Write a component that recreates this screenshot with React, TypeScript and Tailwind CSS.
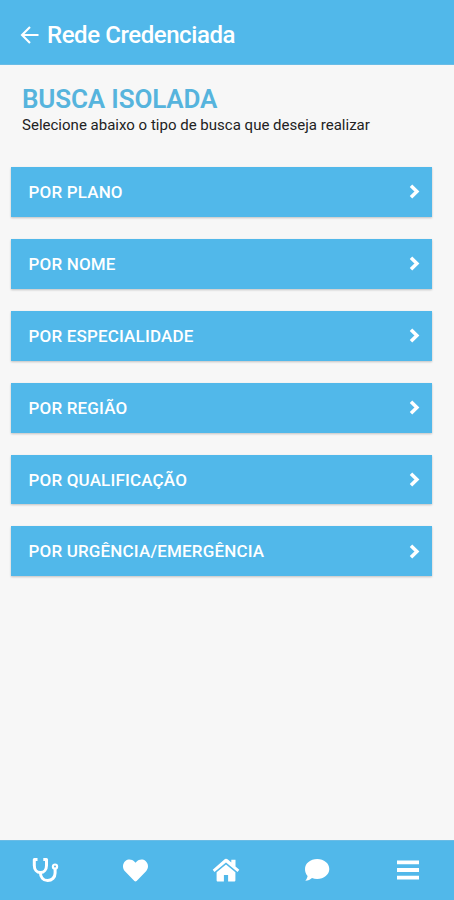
import React from "react";
import { FaHeart } from "react-icons/fa";

const options: string[] = [
  "POR PLANO",
  "POR NOME",
  "POR ESPECIALIDADE",
  "POR REGIÃO",
  "POR QUALIFICAÇÃO",
  "POR URGÊNCIA/EMERGÊNCIA",
];

function BackArrow() {
  return (
    <svg viewBox="0 0 20 20" className="size-5" fill="none" stroke="currentColor" strokeWidth="2.1" aria-hidden="true">
      <path d="M18.5 10H2.5M10 2L2 10l8 8" />
    </svg>
  );
}

function Chevron() {
  return (
    <svg viewBox="0 0 11 15" className="h-[15px] w-[11px]" fill="none" stroke="currentColor" strokeWidth="3.5" aria-hidden="true">
      <path d="M2 1.7L7.9 7.5L2 13.3" />
    </svg>
  );
}

function Stethoscope() {
  return (
    <svg viewBox="0 0 28 28" className="size-7" fill="none" stroke="currentColor" strokeWidth="3" aria-hidden="true">
      <path d="M6.5 3.6H3.3V9.5c0 4 2.6 7 6.1 7s6.1-3 6.1-7V3.6h-3.2" strokeLinejoin="round" />
      <path d="M9.4 16.5c0 4.6 2.8 8.1 7.2 8.1s7.5-3.3 7.5-7.6V13" />
      <circle cx="24" cy="10.6" r="2.1" strokeWidth="2.2" />
    </svg>
  );
}

function Home() {
  return (
    <svg viewBox="0 0 28 24" className="h-6 w-7" fill="currentColor" aria-hidden="true">
      <path d="M14 .8c.7 0 1.3.3 1.9.8l3.4 3V1.7h4.2v6.7l3.8 3.4-1.8 2.1L14 4.5 2.5 13.9.7 11.8l11.4-10c.6-.6 1.2-1 1.9-1z" />
      <path d="M14 6.5l9.4 7.8v7.9c0 .8-.5 1.3-1.3 1.3h-6V17h-4.2v6.5h-6c-.8 0-1.3-.5-1.3-1.3v-7.9z" />
    </svg>
  );
}

function Comment() {
  return (
    <svg viewBox="0 0 26 24" className="h-6 w-[26px]" fill="currentColor" aria-hidden="true">
      <path d="M13.2 1C20 1 25.3 5.4 25.3 11S20 21 13.2 21c-1.9 0-3.6-.3-5.2-.9-1.7 1.7-3.9 2.6-6.7 2.7 1.2-1.5 2-3 2.3-4.9C1.8 16.1 1 13.7 1 11 1 5.4 6.4 1 13.2 1z" />
    </svg>
  );
}

function Bars() {
  return (
    <svg viewBox="0 0 22 20" className="h-5 w-[22px]" fill="currentColor" aria-hidden="true">
      <path d="M0 .4h22v3.8H0zM0 8.1h22v3.8H0zM0 15.8h22v3.8H0z" />
    </svg>
  );
}

export default function App() {
  return (
    <div className="flex h-[900px] w-[454px] flex-col overflow-hidden bg-[#f7f7f7] font-['Roboto',sans-serif]">
      <header className="flex h-[65px] shrink-0 items-center border-b border-[#6abce6] bg-[#51b8ea] pt-[5px] pl-[20px] text-white">
        <BackArrow />
        <h1 className="ml-[7px] text-[24px] leading-7 font-medium tracking-[-0.43px] whitespace-nowrap">
          Rede Credenciada
        </h1>
      </header>

      <main className="flex-1">
        <div className="pt-[19px] pl-[22px]">
          <h2 className="text-[26px] leading-[30px] font-semibold tracking-[-0.15px] whitespace-nowrap text-[#56b4dd]">BUSCA ISOLADA</h2>
          <p className="text-[15px] leading-[22px] tracking-[0.01px] whitespace-nowrap text-[#222]">
            Selecione abaixo o tipo de busca que deseja realizar
          </p>
        </div>
        <nav className="mt-[31px] ml-[11px] flex w-[421px] flex-col gap-[22px]">
          {options.map((label) => (
            <button
              key={label}
              className="flex h-[49.9px] items-center justify-between bg-[#51b8ea] pr-[12px] pl-[17.5px] text-white shadow-[0_1px_2px_rgba(0,0,0,0.22)]"
            >
              <span className="text-[17px] leading-5 font-medium tracking-[0.17px] whitespace-nowrap">{label}</span>
              <Chevron />
            </button>
          ))}
        </nav>
      </main>

      <footer className="grid h-[60px] shrink-0 grid-cols-5 items-center justify-items-center border-t border-[#6abce6] bg-[#51b8ea] pr-px pb-px text-white">
        <Stethoscope />
        <FaHeart className="size-[25px]" />
        <Home />
        <Comment />
        <Bars />
      </footer>
    </div>
  );
}
